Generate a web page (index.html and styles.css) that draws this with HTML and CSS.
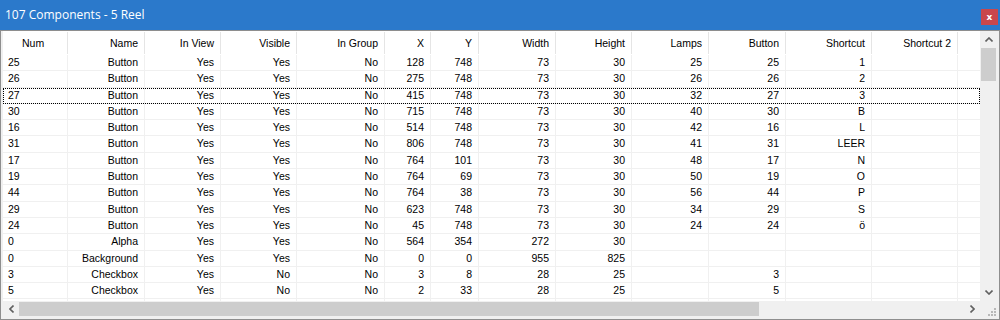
FILE: index.html
```html
<!DOCTYPE html>
<html>
<head>
<meta charset="utf-8">
<link rel="stylesheet" href="styles.css">
</head>
<body>
<div class="window">
  <div class="titlebar">
    <span class="title">107 Components - 5 Reel</span>
    <span class="close">x</span>
  </div>
  <div class="frame">
    <div class="main">
      <div class="list">
        <div class="row head">
          <div class="c first">Num</div><div class="c">Name</div><div class="c">In View</div><div class="c">Visible</div><div class="c">In Group</div><div class="c">X</div><div class="c">Y</div><div class="c">Width</div><div class="c">Height</div><div class="c">Lamps</div><div class="c">Button</div><div class="c">Shortcut</div><div class="c">Shortcut 2</div><div class="c fill"></div>
        </div>
        <div class="row"><div class="c first">25</div><div class="c">Button</div><div class="c">Yes</div><div class="c">Yes</div><div class="c">No</div><div class="c">128</div><div class="c">748</div><div class="c">73</div><div class="c">30</div><div class="c">25</div><div class="c">25</div><div class="c">1</div><div class="c"></div><div class="c fill"></div></div>
        <div class="row"><div class="c first">26</div><div class="c">Button</div><div class="c">Yes</div><div class="c">Yes</div><div class="c">No</div><div class="c">275</div><div class="c">748</div><div class="c">73</div><div class="c">30</div><div class="c">26</div><div class="c">26</div><div class="c">2</div><div class="c"></div><div class="c fill"></div></div>
        <div class="row focus"><div class="c first">27</div><div class="c">Button</div><div class="c">Yes</div><div class="c">Yes</div><div class="c">No</div><div class="c">415</div><div class="c">748</div><div class="c">73</div><div class="c">30</div><div class="c">32</div><div class="c">27</div><div class="c">3</div><div class="c"></div><div class="c fill"></div></div>
        <div class="row"><div class="c first">30</div><div class="c">Button</div><div class="c">Yes</div><div class="c">Yes</div><div class="c">No</div><div class="c">715</div><div class="c">748</div><div class="c">73</div><div class="c">30</div><div class="c">40</div><div class="c">30</div><div class="c">B</div><div class="c"></div><div class="c fill"></div></div>
        <div class="row"><div class="c first">16</div><div class="c">Button</div><div class="c">Yes</div><div class="c">Yes</div><div class="c">No</div><div class="c">514</div><div class="c">748</div><div class="c">73</div><div class="c">30</div><div class="c">42</div><div class="c">16</div><div class="c">L</div><div class="c"></div><div class="c fill"></div></div>
        <div class="row"><div class="c first">31</div><div class="c">Button</div><div class="c">Yes</div><div class="c">Yes</div><div class="c">No</div><div class="c">806</div><div class="c">748</div><div class="c">73</div><div class="c">30</div><div class="c">41</div><div class="c">31</div><div class="c">LEER</div><div class="c"></div><div class="c fill"></div></div>
        <div class="row"><div class="c first">17</div><div class="c">Button</div><div class="c">Yes</div><div class="c">Yes</div><div class="c">No</div><div class="c">764</div><div class="c">101</div><div class="c">73</div><div class="c">30</div><div class="c">48</div><div class="c">17</div><div class="c">N</div><div class="c"></div><div class="c fill"></div></div>
        <div class="row"><div class="c first">19</div><div class="c">Button</div><div class="c">Yes</div><div class="c">Yes</div><div class="c">No</div><div class="c">764</div><div class="c">69</div><div class="c">73</div><div class="c">30</div><div class="c">50</div><div class="c">19</div><div class="c">O</div><div class="c"></div><div class="c fill"></div></div>
        <div class="row"><div class="c first">44</div><div class="c">Button</div><div class="c">Yes</div><div class="c">Yes</div><div class="c">No</div><div class="c">764</div><div class="c">38</div><div class="c">73</div><div class="c">30</div><div class="c">56</div><div class="c">44</div><div class="c">P</div><div class="c"></div><div class="c fill"></div></div>
        <div class="row"><div class="c first">29</div><div class="c">Button</div><div class="c">Yes</div><div class="c">Yes</div><div class="c">No</div><div class="c">623</div><div class="c">748</div><div class="c">73</div><div class="c">30</div><div class="c">34</div><div class="c">29</div><div class="c">S</div><div class="c"></div><div class="c fill"></div></div>
        <div class="row"><div class="c first">24</div><div class="c">Button</div><div class="c">Yes</div><div class="c">Yes</div><div class="c">No</div><div class="c">45</div><div class="c">748</div><div class="c">73</div><div class="c">30</div><div class="c">24</div><div class="c">24</div><div class="c">ö</div><div class="c"></div><div class="c fill"></div></div>
        <div class="row"><div class="c first">0</div><div class="c">Alpha</div><div class="c">Yes</div><div class="c">Yes</div><div class="c">No</div><div class="c">564</div><div class="c">354</div><div class="c">272</div><div class="c">30</div><div class="c"></div><div class="c"></div><div class="c"></div><div class="c"></div><div class="c fill"></div></div>
        <div class="row"><div class="c first">0</div><div class="c">Background</div><div class="c">Yes</div><div class="c">Yes</div><div class="c">No</div><div class="c">0</div><div class="c">0</div><div class="c">955</div><div class="c">825</div><div class="c"></div><div class="c"></div><div class="c"></div><div class="c"></div><div class="c fill"></div></div>
        <div class="row"><div class="c first">3</div><div class="c">Checkbox</div><div class="c">Yes</div><div class="c">No</div><div class="c">No</div><div class="c">3</div><div class="c">8</div><div class="c">28</div><div class="c">25</div><div class="c"></div><div class="c">3</div><div class="c"></div><div class="c"></div><div class="c fill"></div></div>
        <div class="row"><div class="c first">5</div><div class="c">Checkbox</div><div class="c">Yes</div><div class="c">No</div><div class="c">No</div><div class="c">2</div><div class="c">33</div><div class="c">28</div><div class="c">25</div><div class="c"></div><div class="c">5</div><div class="c"></div><div class="c"></div><div class="c fill"></div></div>
        <div class="row"><div class="c first"></div><div class="c"></div><div class="c"></div><div class="c"></div><div class="c"></div><div class="c"></div><div class="c"></div><div class="c"></div><div class="c"></div><div class="c"></div><div class="c"></div><div class="c"></div><div class="c"></div><div class="c fill"></div></div>
      </div>
      <div class="vscroll">
        <div class="arrow"><svg width="8" height="5" viewBox="0 0 8 5"><path d="M0.5 4.5 L4 1 L7.5 4.5" fill="none" stroke="#606060" stroke-width="1.6"/></svg></div>
        <div class="vthumb"></div>
        <div class="vtrack"></div>
        <div class="arrow"><svg width="8" height="5" viewBox="0 0 8 5"><path d="M0.5 0.5 L4 4 L7.5 0.5" fill="none" stroke="#606060" stroke-width="1.6"/></svg></div>
      </div>
    </div>
    <div class="bottom">
      <div class="hscroll">
        <div class="harrow"><svg width="5" height="8" viewBox="0 0 5 8"><path d="M4.5 0.5 L1 4 L4.5 7.5" fill="none" stroke="#606060" stroke-width="1.6"/></svg></div>
        <div class="hthumb"></div>
        <div class="htrack"></div>
        <div class="harrow"><svg width="5" height="8" viewBox="0 0 5 8"><path d="M0.5 0.5 L4 4 L0.5 7.5" fill="none" stroke="#606060" stroke-width="1.6"/></svg></div>
      </div>
      <div class="corner"><svg width="12" height="12" viewBox="0 0 12 12" fill="#b8b8b8"><rect x="9" y="3" width="2" height="2"/><rect x="6" y="6" width="2" height="2"/><rect x="9" y="6" width="2" height="2"/><rect x="3" y="9" width="2" height="2"/><rect x="6" y="9" width="2" height="2"/><rect x="9" y="9" width="2" height="2"/></svg></div>
    </div>
  </div>
</div>
</body>
</html>
```

FILE: styles.css
```css
* { box-sizing: border-box; }
html, body { margin: 0; padding: 0; }
body {
  width: 1000px;
  height: 320px;
  overflow: hidden;
  background: #f0f0f0;
  font-family: "Liberation Sans", Arial, sans-serif;
  font-size: 10.5px;
  color: #000;
}
.window {
  width: 1000px;
  height: 320px;
  display: flex;
  flex-direction: column;
}
.titlebar {
  height: 30px;
  background: #2b79cb;
  display: flex;
  align-items: center;
  justify-content: space-between;
  padding: 0 2px 0 5px;
  flex: none;
}
.title {
  color: #fff;
  font-family: "Open Sans", "Noto Sans", sans-serif;
  font-size: 12px;
  margin-top: -2px;
}
.close {
  width: 17px;
  height: 16px;
  background: #c9474c;
  color: #fff;
  font-family: "DejaVu Sans", sans-serif;
  font-size: 9px;
  font-weight: bold;
  display: flex;
  align-items: center;
  justify-content: center;
  margin-top: 4px;
  line-height: 1;
}
.frame {
  flex: 1;
  border: 1px solid #8e8e8e;
  padding: 0 2px 2px 2px;
  background: #f0f0f0;
  display: flex;
  flex-direction: column;
  min-height: 0;
}
.main {
  flex: 1;
  display: flex;
  min-height: 0;
}
.list {
  flex: 1;
  background: #fff;
  overflow: hidden;
}
.row {
  display: grid;
  grid-template-columns: 65px 77px 76px 76px 88px 46px 48px 77px 76px 77px 77px 86px 86px 1fr;
  height: 16.3px;
  line-height: 15.5px;
  border-bottom: 1px solid #f0f0f0;
  white-space: nowrap;
}
.row.head {
  height: 24px;
  line-height: 22px;
  border-bottom: none;
}
.c {
  text-align: right;
  padding-right: 6px;
  border-right: 1px solid #f0f0f0;
  overflow: hidden;
}
.c.first {
  text-align: left;
  padding-left: 5px;
}
.c.fill { border-right: none; }
.head .c {
  border-right: 1px solid #e5e5e5;
  margin: 1px 0 1px;
}
.head .c.first { padding-left: 19px; }
.head .c.fill { border-right: none; }
.row.focus {
  outline: 1px dotted #000;
  outline-offset: -1px;
}
.vscroll {
  width: 17px;
  display: flex;
  flex-direction: column;
  background: #f0f0f0;
}
.arrow {
  height: 17px;
  display: flex;
  align-items: center;
  justify-content: center;
  flex: none;
}
.vthumb {
  height: 33px;
  margin: 0 1px;
  background: #cdcdcd;
  flex: none;
}
.vtrack { flex: 1; }
.bottom {
  height: 16px;
  display: flex;
  flex: none;
}
.hscroll {
  flex: 1;
  display: flex;
  background: #f0f0f0;
}
.harrow {
  width: 16px;
  display: flex;
  align-items: center;
  justify-content: center;
  flex: none;
}
.hthumb {
  width: 740px;
  margin: 1px 0;
  background: #cdcdcd;
  flex: none;
}
.htrack { flex: 1; }
.corner {
  width: 17px;
  display: flex;
  align-items: flex-end;
  justify-content: flex-end;
}
```
